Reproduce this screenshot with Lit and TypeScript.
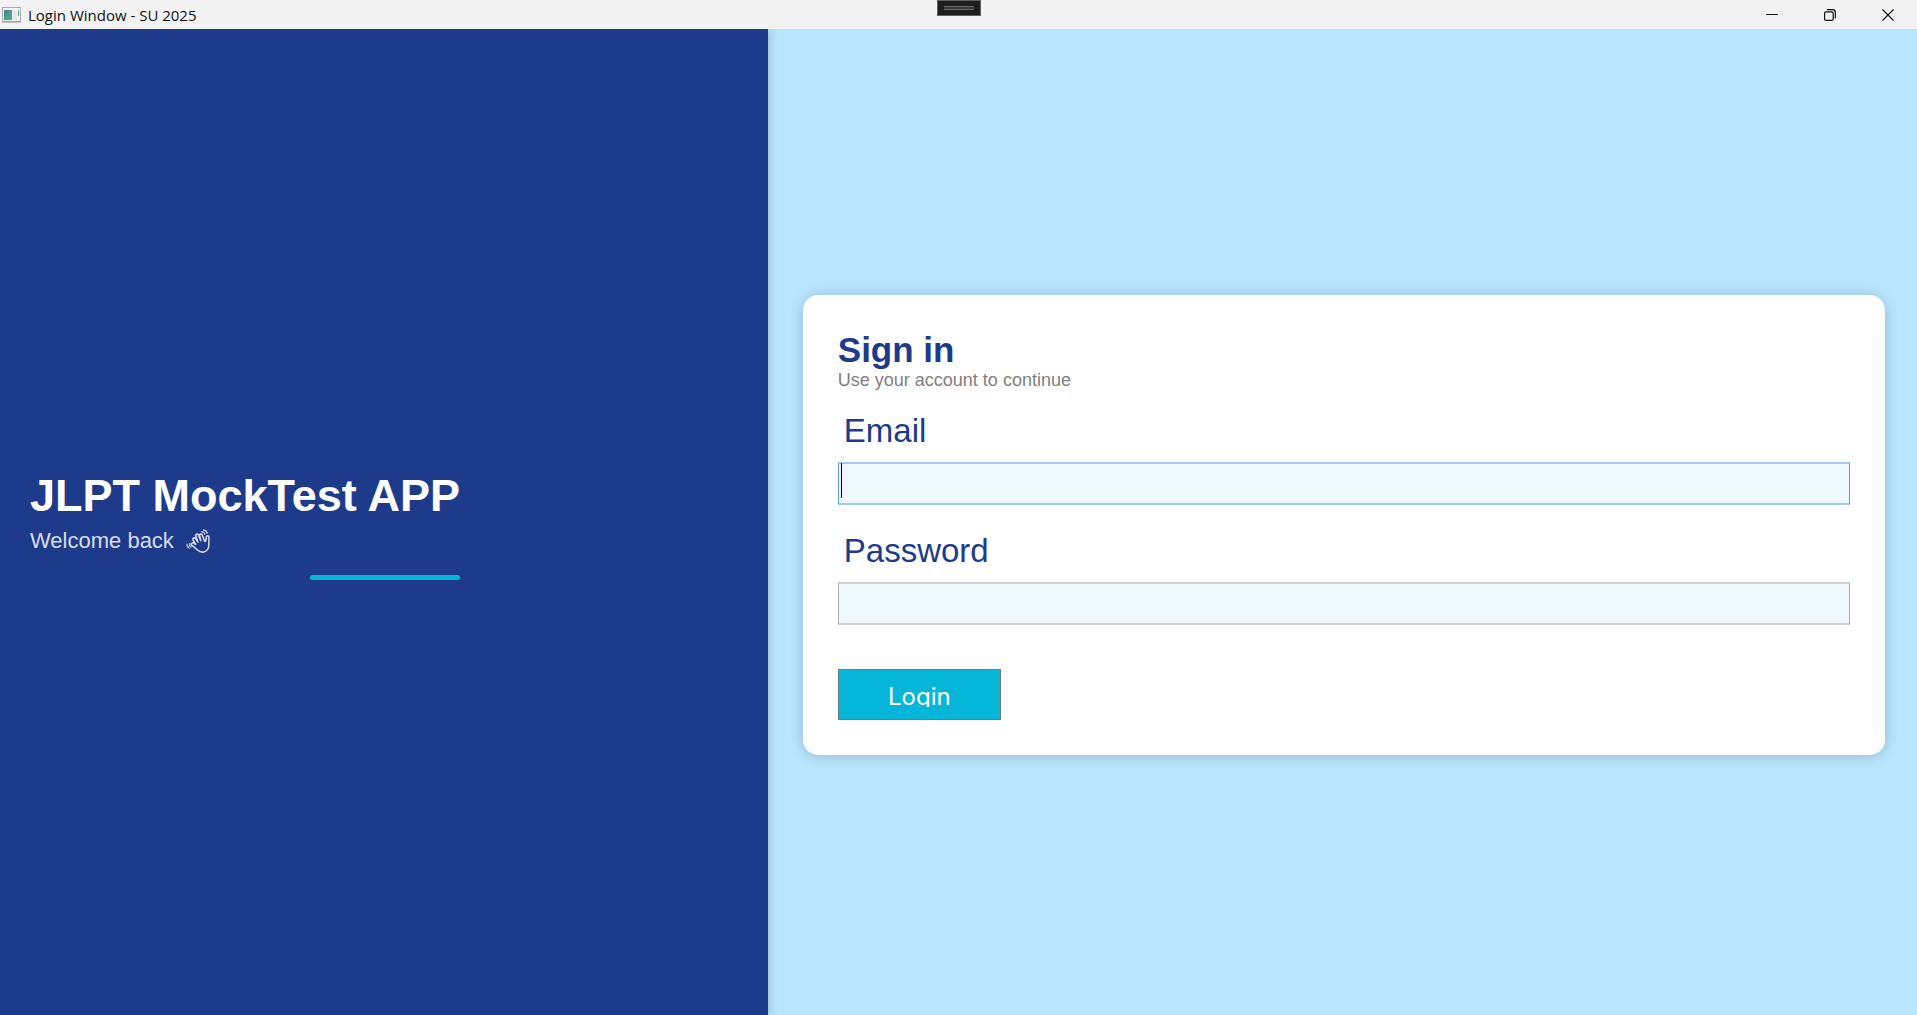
import { LitElement, html, css } from "lit";
import { customElement } from "lit/decorators.js";

@customElement("title-bar")
class TitleBar extends LitElement {
  static styles = css`
    :host {
      display: block;
      position: relative;
      z-index: 1;
      background: #f2f2f2;
      color: #111;
      font-family: "Open Sans", "Noto Sans", sans-serif;
    }
    .bar {
      position: relative;
      display: flex;
      align-items: center;
      justify-content: space-between;
      height: 29px;
    }
    .caption {
      display: flex;
      align-items: center;
      gap: 7px;
      padding-left: 2px;
      font-size: 15px;
      line-height: 28px;
    }
    .app-icon {
      display: block;
      width: 19px;
      height: 16px;
    }
    .controls {
      display: flex;
    }
    .control {
      display: flex;
      align-items: center;
      justify-content: center;
      width: 58px;
      height: 28px;
      padding: 0;
      border: 0;
      background: transparent;
      color: #111;
    }
    .control svg {
      display: block;
    }
    .grip {
      position: absolute;
      top: 0;
      left: calc(50% - 22px);
      box-sizing: border-box;
      width: 44px;
      height: 16px;
      padding: 5px 6px;
      border: 1px solid #625f5f;
      background: #1f1f1f;
    }
    .grip-lines {
      box-sizing: border-box;
      height: 4px;
      border-top: 1px solid #6a6a6a;
      border-bottom: 1px solid #6a6a6a;
      background: #383838;
    }
  `;

  render() {
    return html`
      <header class="bar">
        <div class="caption">
          <svg class="app-icon" viewBox="0 0 19 16" aria-hidden="true">
            <defs>
              <linearGradient id="pane" x1="0" y1="0" x2="1" y2="1">
                <stop offset="0" stop-color="#3f7fa0" />
                <stop offset="1" stop-color="#58b37c" />
              </linearGradient>
            </defs>
            <rect x="0.5" y="0.5" width="18" height="14" fill="#f4f6f7" stroke="#a5adb5" />
            <rect x="2" y="3" width="8" height="10" fill="url(#pane)" />
            <rect x="11" y="3" width="4" height="10" fill="#e4e8ea" />
            <rect x="16" y="3" width="1" height="6" fill="#58a99a" />
            <path d="M0 15h19" stroke="#8d959c" />
          </svg>
          <span>Login Window - SU 2025</span>
        </div>
        <div class="grip"><div class="grip-lines"></div></div>
        <div class="controls">
          <button class="control" aria-label="Minimize">
            <svg width="12" height="12" viewBox="0 0 12 12"><path d="M0 5.5h12" stroke="currentColor" /></svg>
          </button>
          <button class="control" aria-label="Restore">
            <svg width="12" height="12" viewBox="0 0 12 12" fill="none" stroke="currentColor" stroke-width="1.2">
              <rect x="0.6" y="2.8" width="8.6" height="8.6" rx="1.4" />
              <path d="M3 0.7h5.6a2.7 2.7 0 0 1 2.7 2.7v5.8" />
            </svg>
          </button>
          <button class="control" aria-label="Close">
            <svg width="12" height="12" viewBox="0 0 12 12"><path d="M0.5 0.5l11 11M11.5 0.5l-11 11" stroke="currentColor" stroke-width="1.2" /></svg>
          </button>
        </div>
      </header>
    `;
  }
}

@customElement("brand-panel")
class BrandPanel extends LitElement {
  static styles = css`
    :host {
      display: flex;
      align-items: center;
      padding: 6px 30px 0;
      background: #1e3a8a;
      box-shadow: 0 0 10px rgba(0, 0, 0, 0.25);
    }
    .brand {
      display: flex;
      flex-direction: column;
    }
    .name {
      margin: 0;
      color: #fff;
      font-size: 45px;
      line-height: 50px;
      white-space: nowrap;
    }
    .welcome {
      display: flex;
      align-items: center;
      gap: 12px;
      margin: 6px 0 0;
      color: #d8ddec;
      font-size: 22px;
      line-height: 28px;
    }
    .wave {
      display: block;
      width: 24px;
      height: 24px;
    }
    .accent {
      align-self: flex-end;
      width: 150px;
      height: 5px;
      margin-top: 20px;
      border-radius: 3px;
      background: #06b6d4;
    }
  `;

  render() {
    return html`
      <div class="brand">
        <h1 class="name">JLPT MockTest APP</h1>
        <p class="welcome">
          Welcome back
          <svg class="wave" viewBox="0 0 24 24" fill="none" stroke="currentColor" stroke-width="1.5"
            stroke-linecap="round" stroke-linejoin="round" role="img" aria-label="waving hand">
            <path d="M11.5 21L6 16.4c-1.6-1.5.3-3.5 1.9-2.2l1.8 1.3-2.6-4.5c-.9-1.8 1.4-3 2.5-1.4l2.4 3.6-2.2-6.2c-.6-1.8 1.8-2.6 2.6-1l2.4 5.6-1.2-5c-.3-1.7 1.9-2.2 2.6-.7l2.3 6.2c.5.5 1 .2 1.2-.6l.7-3.7c.6-1.6 2.7-1.2 2.6.5l-.2 8c-.2 6.2-6.4 9-11.300 4.700z" />
            <path d="M15.600 2.600c1.600.1 2.800 1 3.400 2.600M17.600.8c2 .3 3.200 1.500 3.600 3.400" stroke-width="1.2" />
            <path d="M3.500 14.600c-.2 1.400.3 2.500 1.500 3.400M1 15.200c0 1.800.7 3.100 2.200 4" stroke-width="1.2" />
          </svg>
        </p>
        <div class="accent"></div>
      </div>
    `;
  }
}

@customElement("sign-in-card")
class SignInCard extends LitElement {
  static styles = css`
    :host {
      display: block;
      padding: 35px;
      border-radius: 15px;
      background: #fff;
      box-shadow: 0 1px 14px rgba(0, 0, 0, 0.2);
    }
    .form {
      display: flex;
      flex-direction: column;
    }
    .heading {
      margin: 0;
      color: #1e3a8a;
      font-size: 35px;
      line-height: 40px;
    }
    .hint {
      margin: 0 0 21px;
      color: #808080;
      font-size: 18px;
      line-height: 20px;
    }
    .label {
      padding: 0 6px;
      color: #1e3a8a;
      font-size: 33px;
      line-height: 40px;
    }
    .field {
      position: relative;
      display: flex;
      margin: 11px 0 26px;
    }
    .input {
      box-sizing: border-box;
      width: 100%;
      height: 43px;
      padding: 2px 4px;
      border: solid #abadb3;
      border-width: 2px 1px;
      border-top-color: #cdd1d6;
      border-bottom-color: #cdd1d6;
      border-radius: 0;
      outline: none;
      background: #f0f8ff;
      font: 30px/36px "Liberation Sans", Arial, sans-serif;
    }
    .active .input {
      border-color: #9fcaf2 #569de5;
    }
    .caret {
      position: absolute;
      top: 1px;
      left: 3px;
      width: 1px;
      height: 35px;
      background: #000;
    }
    .submit {
      display: flex;
      justify-content: center;
      align-items: center;
      align-self: flex-start;
      box-sizing: border-box;
      width: 163px;
      height: 51px;
      margin-top: 18px;
      padding: 0;
      border: 1px solid #70797b;
      border-radius: 0;
      background: #06b6d8;
      color: #fff;
      font: 24px/30px Inter, sans-serif;
    }
    .submit-text {
      height: 23px;
      margin-top: 2px;
      overflow: hidden;
      line-height: 26px;
    }
  `;

  render() {
    return html`
      <form class="form" @submit=${(e: Event) => e.preventDefault()}>
        <h2 class="heading">Sign in</h2>
        <p class="hint">Use your account to continue</p>
        <label class="label" for="email">Email</label>
        <div class="field active">
          <input class="input" id="email" type="text" />
          <span class="caret"></span>
        </div>
        <label class="label" for="password">Password</label>
        <div class="field">
          <input class="input" id="password" type="password" />
        </div>
        <button class="submit" type="submit"><span class="submit-text">Login</span></button>
      </form>
    `;
  }
}

@customElement("app-root")
class AppRoot extends LitElement {
  static styles = css`
    :host {
      display: flex;
      flex-direction: column;
      min-height: 100vh;
      font-family: "Liberation Sans", Arial, sans-serif;
    }
    .content {
      flex: 1;
      display: grid;
      grid-template-columns: calc(40% + 1px) 1fr;
      background: #b9e6fe;
    }
    .main {
      display: flex;
      flex-direction: column;
      justify-content: center;
      padding: 5px 32px 0 35px;
    }
  `;

  render() {
    return html`
      <title-bar></title-bar>
      <div class="content">
        <brand-panel></brand-panel>
        <main class="main"><sign-in-card></sign-in-card></main>
      </div>
    `;
  }
}
